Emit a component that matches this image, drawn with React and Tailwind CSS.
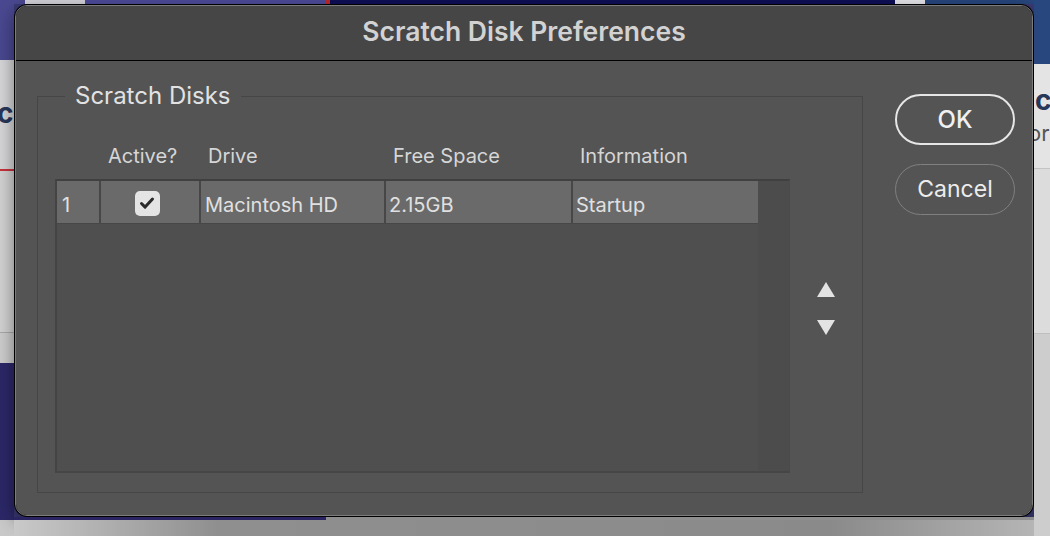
import React from "react";

const font = "font-['Inter','Liberation_Sans',sans-serif]";

function Arrow({ down }) {
  return (
    <svg width="18" height="15" viewBox="0 0 18 15">
      <path d={down ? "M0 0H18L9 15Z" : "M9 0L18 15H0Z"} fill="#e3e3e3" />
    </svg>
  );
}

function CheckBox() {
  return (
    <div className="w-[25px] h-[25px] rounded-[5px] bg-[#e4e4e4] flex items-center justify-center">
      <svg width="18" height="18" viewBox="0 0 18 18">
        <path d="M3.5 9.5l3.6 3.6 7.4-8" fill="none" stroke="#2a2a2a" strokeWidth="3" strokeLinecap="round" strokeLinejoin="round" />
      </svg>
    </div>
  );
}

export default function App() {
  // columns of the disk table: width, header label, row value
  const cols = [
    { w: "w-[42px]", head: "", val: "1", pad: "pl-[5px]" },
    { w: "w-[98px]", head: "Active?", val: null, pad: "pr-[6px]" },
    { w: "w-[183px]", head: "Drive", val: "Macintosh HD", pad: "pl-[4px]" },
    { w: "w-[185px]", head: "Free Space", val: "2.15GB", pad: "pl-[3px]" },
    { w: "w-[185px]", head: "Information", val: "Startup", pad: "pl-[3px]" },
  ];

  return (
    <div className={`w-[1050px] h-[536px] flex overflow-hidden ${font}`}>
      {/* left strip of the page behind */}
      <div className="w-[14px] flex flex-col overflow-hidden">
        <div className="h-[60px] bg-[#4a4890]" />
        <div className="h-[109px] bg-[#d6d6d8] overflow-hidden">
          <div className="-ml-[3px] mt-[36px] text-[28px] leading-[34px] font-bold text-[#27375a]">co</div>
        </div>
        <div className="h-[2px] bg-[#c8323c]" />
        <div className="h-[161px] bg-[#d2d2d2]" />
        <div className="h-[1px] bg-[#a9a9a9]" />
        <div className="h-[30px] bg-[#cdcdcd]" />
        <div className="h-[157px] bg-[#2c2868]" />
        <div className="flex-1 bg-[#c9c9c9]" />
      </div>

      {/* middle: dialog */}
      <div className="w-[1020px] flex flex-col bg-[#3b3a74]">
        <div className="h-[4px] flex">
          <div className="w-[11px] bg-[#4a4890]" />
          <div className="w-[60px] bg-[#d4d4da]" />
          <div className="w-[241px] bg-[#4d4b9b]" />
          <div className="w-[4px] bg-[#c0282d]" />
          <div className="w-[565px] bg-[#0e0e58]" />
          <div className="w-[30px] bg-[#e8e8ec]" />
          <div className="flex-1 bg-[#28477e]" />
        </div>

        <div className="h-[513px] rounded-[13px] border border-black bg-black shadow-[0_6px_18px_rgba(0,0,0,0.45)]">
          <div className="h-full rounded-[12px] border border-[#7c7c7c] overflow-hidden flex flex-col">
            <div className="h-[55px] bg-[#464646] border-b border-black flex items-center justify-center">
              <span className="text-[26.5px] font-semibold text-[#d2d2d2] -mt-[3px]">Scratch Disk Preferences</span>
            </div>

            <div className="flex-1 bg-[#545454] flex pl-[21px] pr-[17px] pt-[22px] pb-[22px] gap-[32px]">
              <fieldset className="w-[826px] border border-[#464646] pl-[17px] pb-[19px] flex flex-col">
                <legend className="ml-[10px] px-[10px] text-[24px] leading-[26px] text-[#e2e2e2]">Scratch Disks</legend>

                <div className="h-[70px] flex items-end pb-[11px] pl-[2px]">
                  {cols.map((c, i) => (
                    <div key={i} className={`${c.w} mr-[2px] pl-[7px] text-[20px] leading-[24px] text-[#d6d6d6] whitespace-nowrap`}>
                      {c.head}
                    </div>
                  ))}
                </div>

                <div className="flex-1 flex">
                  <div className="w-[735px] border-t-2 border-l-2 border-b-2 border-r border-t-[#404040] border-l-[#444444] border-b-[#464646] border-r-[#4a4a4a] bg-[#4f4f4f] flex">
                    <div className="w-[701px]">
                      <div className="h-[43px] flex border-b border-[#474747] bg-[#474747]">
                        {cols.map((c, i) => (
                          <div
                            key={i}
                            className={`${c.w} ${i < 4 ? "mr-[2px]" : ""} ${c.pad} bg-[#6a6a6a] flex items-center ${c.val === null ? "justify-center pt-[2px]" : "pt-[5px]"} text-[20px] text-[#e0e0e0] whitespace-nowrap`}
                          >
                            {c.val === null ? <CheckBox /> : c.val}
                          </div>
                        ))}
                      </div>
                    </div>
                    <div className="flex-1 bg-[#4c4c4c]" />
                  </div>

                  <div className="flex-1 flex flex-col items-center pt-[103px] gap-[23px]">
                    <Arrow />
                    <Arrow down />
                  </div>
                </div>
              </fieldset>

              <div className="w-[120px] flex flex-col gap-[19px] pt-[11px]">
                <button className="h-[51px] rounded-full border-2 border-[#e6e6e6] text-[24px] font-medium text-[#f0f0f0] flex items-center justify-center">
                  OK
                </button>
                <button className="h-[51px] rounded-full border-[1.5px] border-[#808080] text-[23px] text-[#ececec] flex items-center justify-center">
                  Cancel
                </button>
              </div>
            </div>
          </div>
        </div>

        <div className="flex-1 flex flex-col">
          <div className="h-[3px] flex">
            <div className="w-[312px] bg-[#2a2562]" />
            <div className="flex-1 bg-[#8e8e8e]" />
          </div>
          <div className="flex-1 bg-[linear-gradient(to_right,#c9c9c9,#8f8f8f_20%,#8a8a8a_80%,#b5b5b5)]" />
        </div>
      </div>

      {/* right strip of the page behind */}
      <div className="w-[16px] flex flex-col overflow-hidden">
        <div className="h-[64px] bg-[#28477e]" />
        <div className="h-[104px] bg-[#e4e4e4] overflow-hidden">
          <div className="ml-[1px] mt-[19px] text-[28px] leading-[34px] font-bold text-[#27375a] whitespace-nowrap">co</div>
          <div className="-ml-[6px] mt-[2px] text-[22px] leading-[28px] text-[#555555] whitespace-nowrap">or</div>
        </div>
        <div className="h-[1px] bg-[#c4c4c4]" />
        <div className="h-[164px] bg-[#dcdcdc]" />
        <div className="h-[1px] bg-[#bfbfbf]" />
        <div className="flex-1 bg-[#cdcdcd]" />
      </div>
    </div>
  );
}
